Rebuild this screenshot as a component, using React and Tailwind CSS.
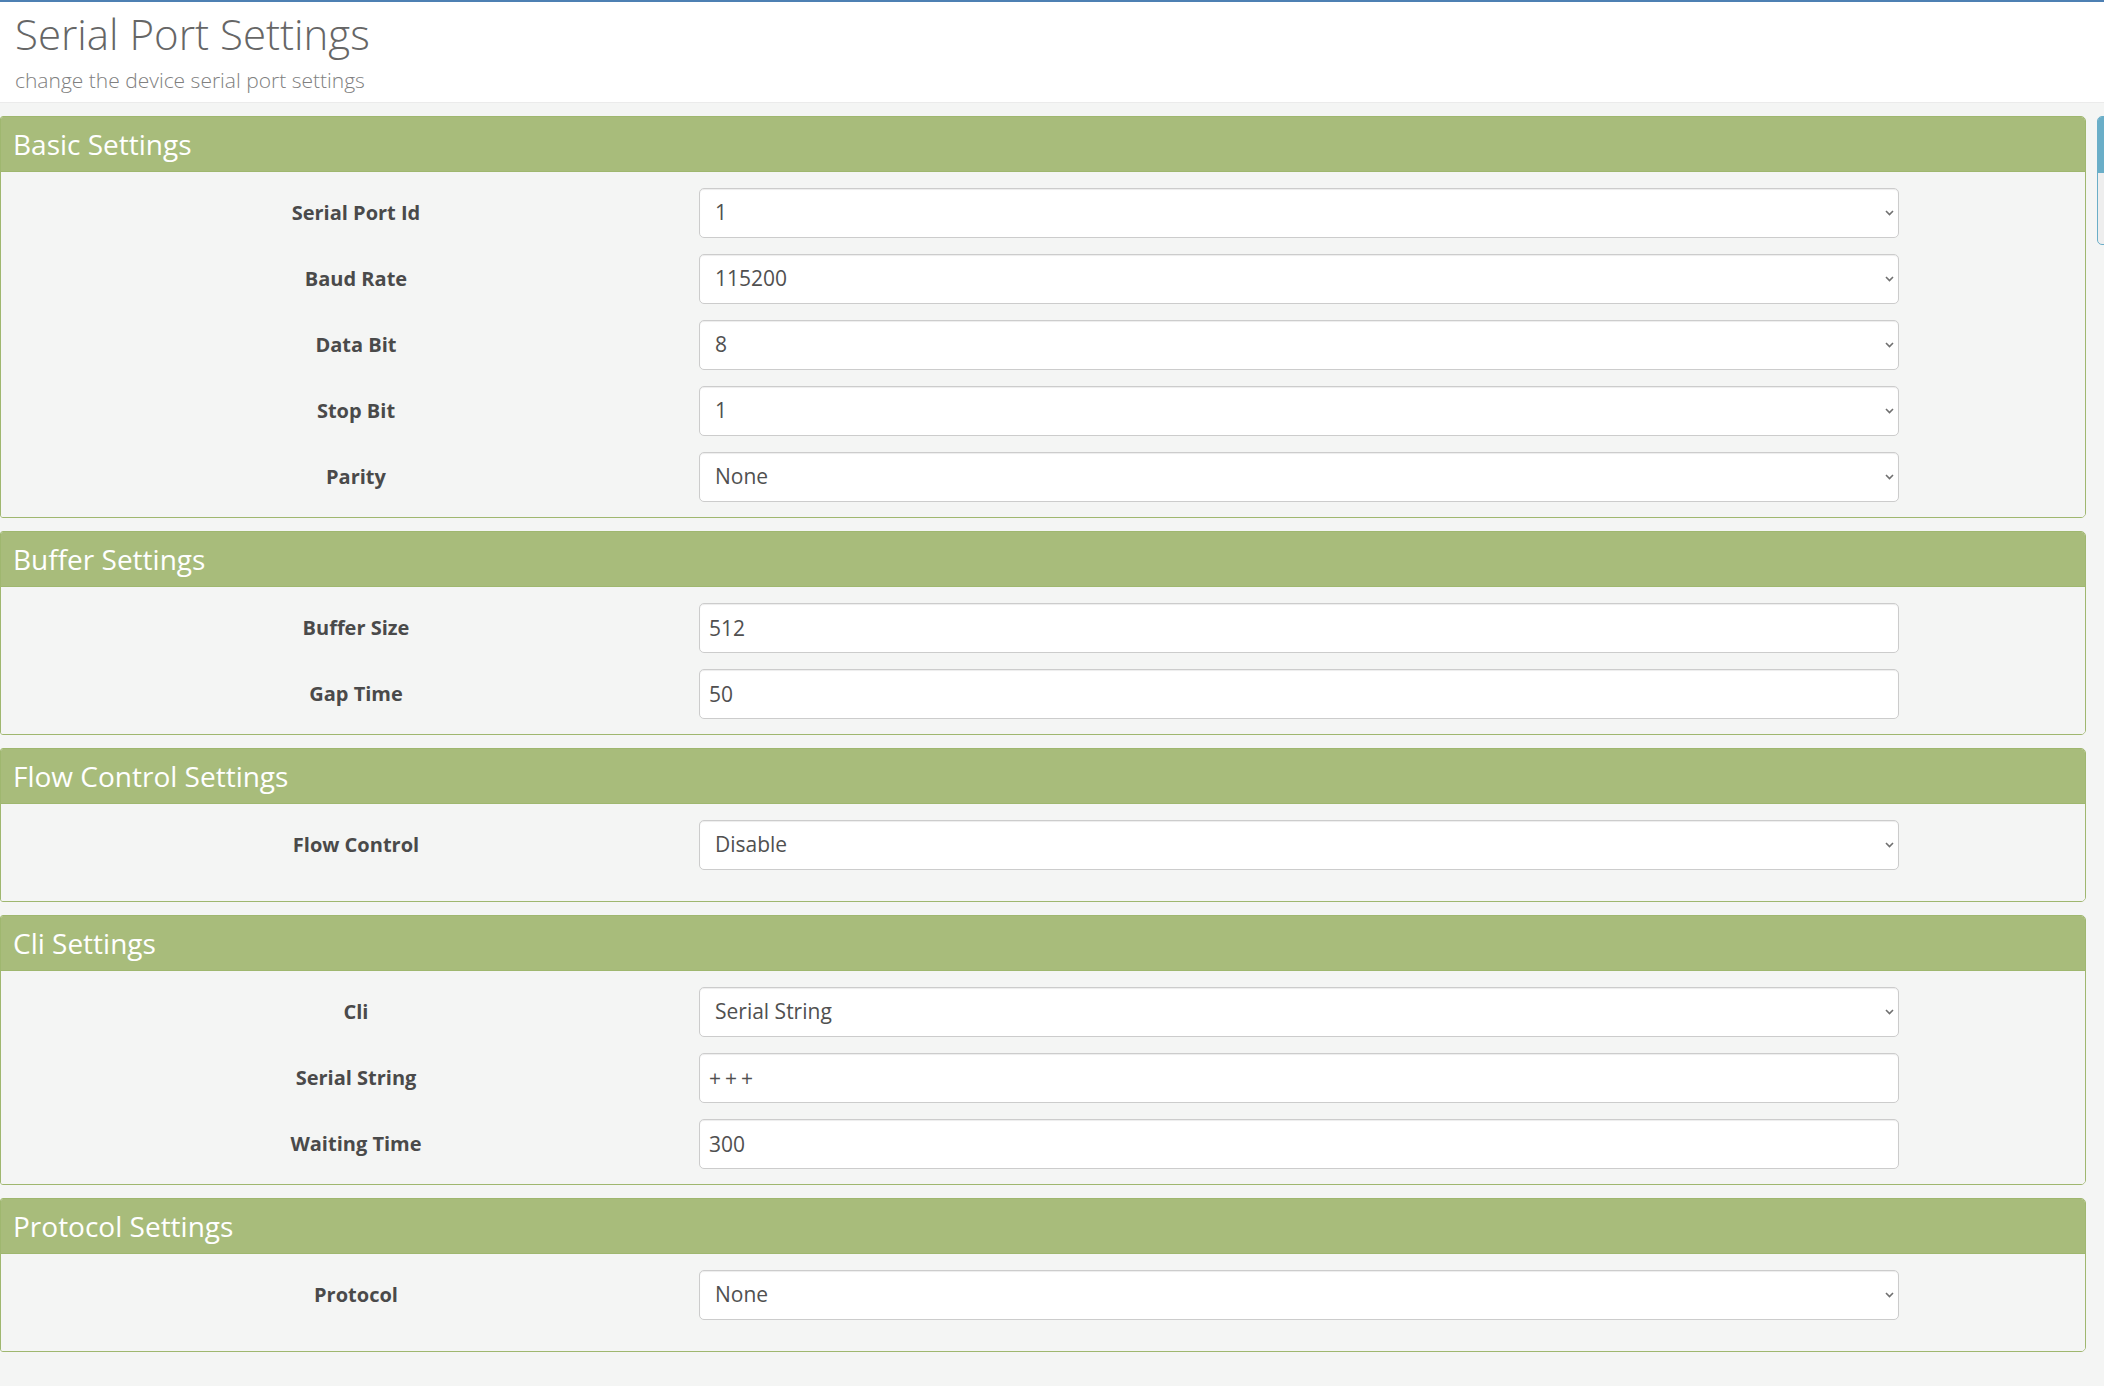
const SECTIONS = [
  {
    title: 'Basic Settings',
    rows: [
      { label: 'Serial Port Id', type: 'select', value: '1', options: ['1', '2'] },
      { label: 'Baud Rate', type: 'select', value: '115200', options: ['9600', '19200', '38400', '57600', '115200'] },
      { label: 'Data Bit', type: 'select', value: '8', options: ['7', '8'] },
      { label: 'Stop Bit', type: 'select', value: '1', options: ['1', '2'] },
      { label: 'Parity', type: 'select', value: 'None', options: ['None', 'Odd', 'Even'] },
    ],
  },
  {
    title: 'Buffer Settings',
    rows: [
      { label: 'Buffer Size', type: 'input', value: '512' },
      { label: 'Gap Time', type: 'input', value: '50' },
    ],
  },
  {
    title: 'Flow Control Settings',
    tall: true,
    rows: [{ label: 'Flow Control', type: 'select', value: 'Disable', options: ['Disable', 'Enable'] }],
  },
  {
    title: 'Cli Settings',
    rows: [
      { label: 'Cli', type: 'select', value: 'Serial String', options: ['Serial String', 'Disable'] },
      { label: 'Serial String', type: 'input', value: '+++', spaced: true },
      { label: 'Waiting Time', type: 'input', value: '300' },
    ],
  },
  {
    title: 'Protocol Settings',
    tall: true,
    rows: [{ label: 'Protocol', type: 'select', value: 'None', options: ['None', 'Modbus'] }],
  },
];

const fieldCls =
  'w-full h-[50px] bg-white border border-[#cccccc] rounded-[5px] text-[21px] text-[#505050] shadow-[inset_0_1px_1px_rgba(0,0,0,0.075)] outline-none';

function Field({ row }) {
  if (row.type === 'select') {
    return (
      <div className="relative w-[1200px]">
        <select defaultValue={row.value} className={`${fieldCls} appearance-none pl-[15px] pr-8`}>
          {row.options.map((o) => (
            <option key={o} value={o}>{o}</option>
          ))}
        </select>
        <svg className="absolute right-[5px] top-1/2 -translate-y-1/2 pointer-events-none" width="9" height="6" viewBox="0 0 9 6">
          <polyline points="1,1 4.5,4.5 8,1" fill="none" stroke="#707070" strokeWidth="1.6" />
        </svg>
      </div>
    );
  }
  return (
    <div className="w-[1200px]">
      <input type="text" defaultValue={row.value}
        className={`${fieldCls} pl-[9px] ${row.spaced ? 'tracking-[4px]' : ''}`} />
    </div>
  );
}

function Panel({ section }) {
  return (
    <div className="border border-[#9fb76f] rounded-r-[5px] rounded-l-[3px] overflow-hidden">
      <div className="h-[55px] bg-[#a8bc7b] border-b border-[#9fb76f] flex items-center pl-[12px]">
        <h3 className="text-[28px] text-white font-normal leading-none">{section.title}</h3>
      </div>
      <div className={`bg-[#f4f5f4] pt-[16px] flex flex-col gap-4 ${section.tall ? 'pb-[31px]' : 'pb-[15px]'}`}>
        {section.rows.map((row) => (
          <div key={row.label} className="flex items-center pl-[12px]">
            <label className="w-[686px] text-center text-[20px] font-bold text-[#4a4a4a]">{row.label}</label>
            <Field row={row} />
          </div>
        ))}
      </div>
    </div>
  );
}

export default function App() {
  return (
    <div className="w-[2104px] min-h-[1386px] bg-[#f4f5f4] overflow-hidden" style={{ fontFamily: '"Open Sans", "Noto Sans", sans-serif' }}>
      {/* Page header */}
      <div className="bg-white border-t-2 border-[#4d80b3] border-b border-b-[#ebebeb] h-[103px] pl-[15px] pt-[3px]">
        <h1 className="text-[42px] font-light text-[#666666] leading-[58px]">Serial Port Settings</h1>
        <p className="text-[21px] font-light text-[#808080] leading-[34px]">change the device serial port settings</p>
      </div>

      <div className="flex items-start gap-[11px] pt-[13px]">
        <div className="w-[2086px] shrink-0 flex flex-col gap-[13px]">
          {SECTIONS.map((s) => (
            <Panel key={s.title} section={s} />
          ))}
        </div>
        {/* next column, cut off at the window edge */}
        <div className="w-[300px] shrink-0 h-[129px] border border-[#6aaec8] rounded-[5px] overflow-hidden bg-[#eeeeee]">
          <div className="h-[56px] bg-[#6aaec8]" />
        </div>
      </div>
    </div>
  );
}
